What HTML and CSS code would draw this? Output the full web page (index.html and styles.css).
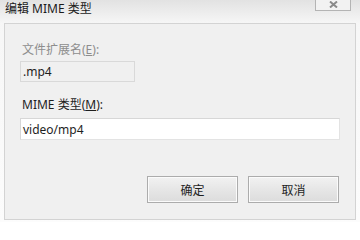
FILE: index.html
```html
<!DOCTYPE html>
<html lang="zh-CN">
<head>
<meta charset="utf-8">
<title>编辑 MIME 类型</title>
<link rel="stylesheet" href="styles.css">
</head>
<body>
<div class="window">
  <div class="titlebar">
    <span class="title">编辑 MIME 类型</span>
    <button class="close" aria-label="关闭">
      <svg width="9" height="7" viewBox="0 0 9 7"><path d="M1 0.5 L8 6.5 M8 0.5 L1 6.5" stroke="#8a8a8a" stroke-width="2"/></svg>
    </button>
  </div>
  <div class="panel">
    <div class="label disabled">文件扩展名(<u>E</u>):</div>
    <div class="input ext">.mp4</div>
    <div class="label second">MIME 类型(<u>M</u>):</div>
    <div class="input mime">video/mp4</div>
    <div class="buttons">
      <button class="btn">确定</button>
      <button class="btn">取消</button>
    </div>
  </div>
</div>
</body>
</html>
```

FILE: styles.css
```css
html, body {
  margin: 0;
  padding: 0;
}
body {
  font-family: "Noto Sans", "Noto Sans CJK SC", sans-serif;
  font-size: 12px;
  color: #1e1e1e;
}
.window {
  width: 360px;
  height: 222px;
  background: linear-gradient(#f6f6f6, #fcfcfc);
  display: flex;
  flex-direction: column;
  box-sizing: border-box;
}
.titlebar {
  height: 23px;
  flex: none;
  display: flex;
  align-items: flex-start;
  justify-content: space-between;
  background: linear-gradient(#e2e2e2, #f6f6f6);
  position: relative;
}
.title {
  padding-left: 5px;
  line-height: 16px;
  padding-top: 1px;
  color: #1b1b1b;
}
.close {
  margin: -2px 9px 0 0;
  width: 36px;
  height: 13px;
  border: 1px solid #b4b4b4;
  border-top: none;
  background: #f2f2f2;
  padding: 0;
  display: flex;
  align-items: center;
  justify-content: center;
  box-sizing: border-box;
}
.close svg {
  display: block;
  margin-top: 0px;
}
.panel {
  margin: 0 4px 2px 4px;
  flex: 1;
  background: #f0f0f0;
  border: 1px solid #d3d3d3;
  padding: 18px 16px 0 15px;
  display: flex;
  flex-direction: column;
  align-items: flex-start;
}
.label {
  line-height: 16px;
  padding-left: 2px;
}
.label u {
  text-decoration-thickness: 1px;
  text-underline-offset: 1px;
}
.disabled {
  color: #8d8d8d;
}
.input {
  box-sizing: border-box;
  border: 1px solid #dcdcdc;
  padding-left: 2px;
  display: flex;
  align-items: center;
}
.ext {
  margin-top: 3px;
  width: 115px;
  height: 21px;
  background: #f0f0f0;
  border-color: #d9d9d9;
}
.second {
  margin-top: 15px;
}
.mime {
  margin-top: 5px;
  width: 320px;
  height: 22px;
  background: #ffffff;
  border-color: #d7d7d7 #e3e3e3 #e3e3e3 #d7d7d7;
}
.buttons {
  margin-top: 36px;
  align-self: stretch;
  display: flex;
  justify-content: flex-end;
  gap: 10px;
  padding-right: 0;
}
.btn {
  width: 91px;
  height: 27px;
  box-sizing: border-box;
  border: 1px solid #acacac;
  box-shadow: inset 0 0 0 1px #fbfbfb;
  background: linear-gradient(#f2f2f2, #e6e6e6 50%, #dcdcdc);
  font-family: "Noto Sans CJK SC", sans-serif;
  font-size: 12px;
  color: #1e1e1e;
  padding: 0;
}
```
